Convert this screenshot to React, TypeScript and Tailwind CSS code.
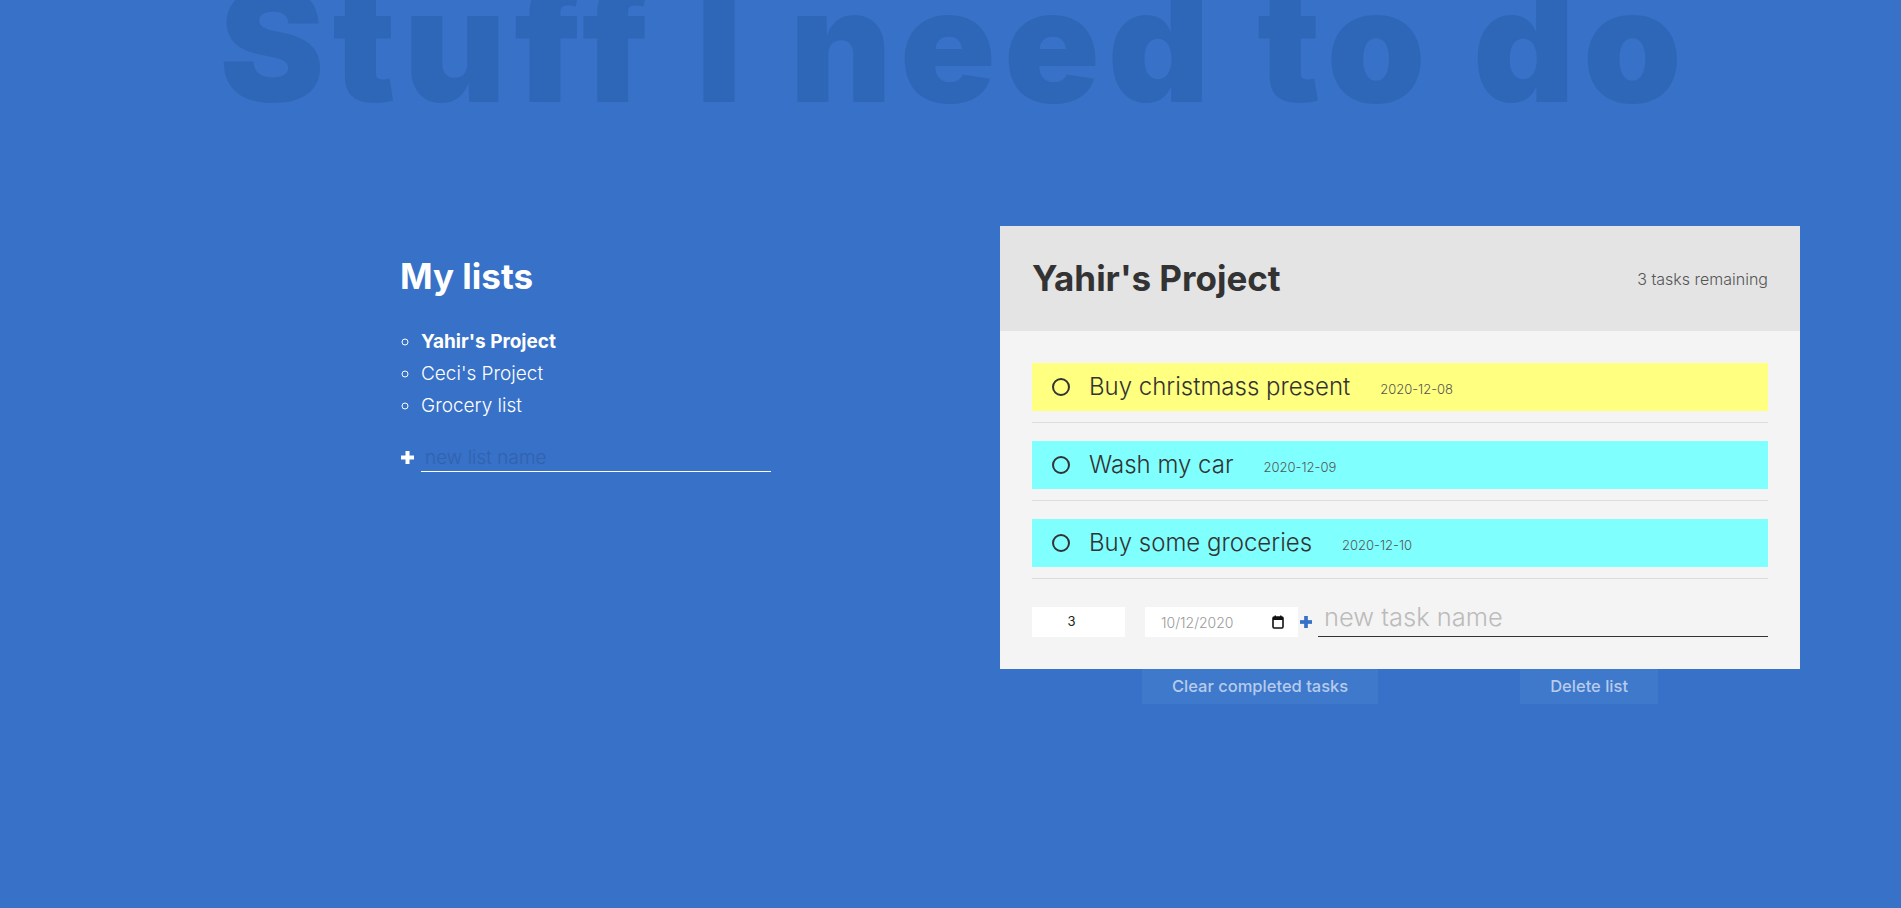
import React from "react";

function Plus({ className, size = 13 }: { className?: string; size?: number }) {
  return (
    <svg width={size} height={size} viewBox="0 0 13 13" className={className}>
      <rect x="0" y="4.5" width="13" height="4" fill="currentColor" />
      <rect x="4.5" y="0" width="4" height="13" fill="currentColor" />
    </svg>
  );
}

function CalendarIcon() {
  return (
    <svg width="12" height="14" viewBox="0 0 12 14">
      <rect x="1" y="2" width="10" height="11" rx="1.2" fill="none" stroke="#111" strokeWidth="1.6" />
      <rect x="1" y="2" width="10" height="3" fill="#111" />
      <rect x="2.6" y="0.5" width="1.4" height="2" fill="#111" />
      <rect x="8" y="0.5" width="1.4" height="2" fill="#111" />
    </svg>
  );
}

const tasks = [
  { name: "Buy christmass present", date: "2020-12-08", bg: "bg-[#ffff80]" },
  { name: "Wash my car", date: "2020-12-09", bg: "bg-[#80ffff]" },
  { name: "Buy some groceries", date: "2020-12-10", bg: "bg-[#80ffff]" },
];

export default function App() {
  return (
    <div className="min-h-screen w-full overflow-hidden bg-[#3771c8] font-['Inter','Liberation_Sans',sans-serif]">
      <h1 className="mt-[-34px] pl-[8px] text-center text-[158px] font-black leading-none tracking-[8px] text-[#2f67b8] whitespace-nowrap">
        Stuff I need to do
      </h1>

      <div className="mt-[102px] flex pl-[400px]">
        {/* Left column */}
        <div className="w-[600px] text-white">
          <h2 className="mt-[29px] text-[35px] font-bold leading-[42px]">My lists</h2>
          <ul className="mt-[29px] list-[circle] pl-[21px] text-[19px] leading-[32px] font-light">
            <li className="font-bold">Yahir's Project</li>
            <li>Ceci's Project</li>
            <li>Grocery list</li>
          </ul>
          <form className="mt-[21px] flex items-center gap-[7px] pl-[1px]">
            <Plus className="text-white" />
            <input
              type="text"
              placeholder="new list name"
              className="h-[29px] w-[350px] border-b border-white bg-transparent px-[4px] text-[19px] font-light text-white outline-none placeholder:text-[#3362ad]"
            />
          </form>
        </div>

        {/* Right column */}
        <div className="w-[800px]">
          <div>
            <div className="flex h-[105px] items-center justify-between bg-[#e4e4e4] px-[32px]">
              <h2 className="text-[35px] font-bold leading-none text-[#333]">Yahir's Project</h2>
              <p className="text-[16px] font-light text-[#555]">3 tasks remaining</p>
            </div>
            <div className="bg-[#f4f4f4] px-[32px] pt-[32px] pb-[32px]">
              {tasks.map((t) => (
                <div key={t.name} className="mb-[18px] border-b border-[#dddddd] pb-[11px]">
                  <div className={`flex h-[48px] items-center pl-[20px] ${t.bg}`}>
                    <span className="h-[18px] w-[18px] shrink-0 rounded-full border-2 border-[#333]" />
                    <span className="ml-[19px] text-[24px] font-light text-[#333]">{t.name}</span>
                    <span className="ml-[30px] mt-[6px] text-[13px] font-light text-[#555]">{t.date}</span>
                  </div>
                </div>
              ))}
              <form className="mt-[28px] flex h-[30px] items-center">
                <div className="flex h-[30px] w-[93px] items-center justify-center bg-white pr-[14px] text-[13px] text-[#222]">
                  3
                </div>
                <div className="ml-[20px] flex h-[30px] w-[153px] items-center justify-between bg-white pl-[16px] pr-[14px] text-[14px] font-light text-[#999]">
                  <span>10/12/2020</span>
                  <CalendarIcon />
                </div>
                <Plus className="ml-[2px] text-[#3771c8]" size={12} />
                <input
                  type="text"
                  placeholder="new task name"
                  className="ml-[6px] h-[30px] flex-1 border-b-[1.5px] border-[#333] bg-transparent px-[6px] pb-[8px] text-[25.5px] font-light text-[#333] outline-none placeholder:text-[#bbbbbb]"
                />
              </form>
            </div>
          </div>
          <div className="flex justify-evenly">
            <button className="h-[35px] bg-[#3f79cc] px-[30px] text-[16.5px] font-medium text-[#b7cbeb]">
              Clear completed tasks
            </button>
            <button className="h-[35px] bg-[#3f79cc] px-[30px] text-[16.5px] font-medium text-[#b7cbeb]">
              Delete list
            </button>
          </div>
        </div>
      </div>
    </div>
  );
}
